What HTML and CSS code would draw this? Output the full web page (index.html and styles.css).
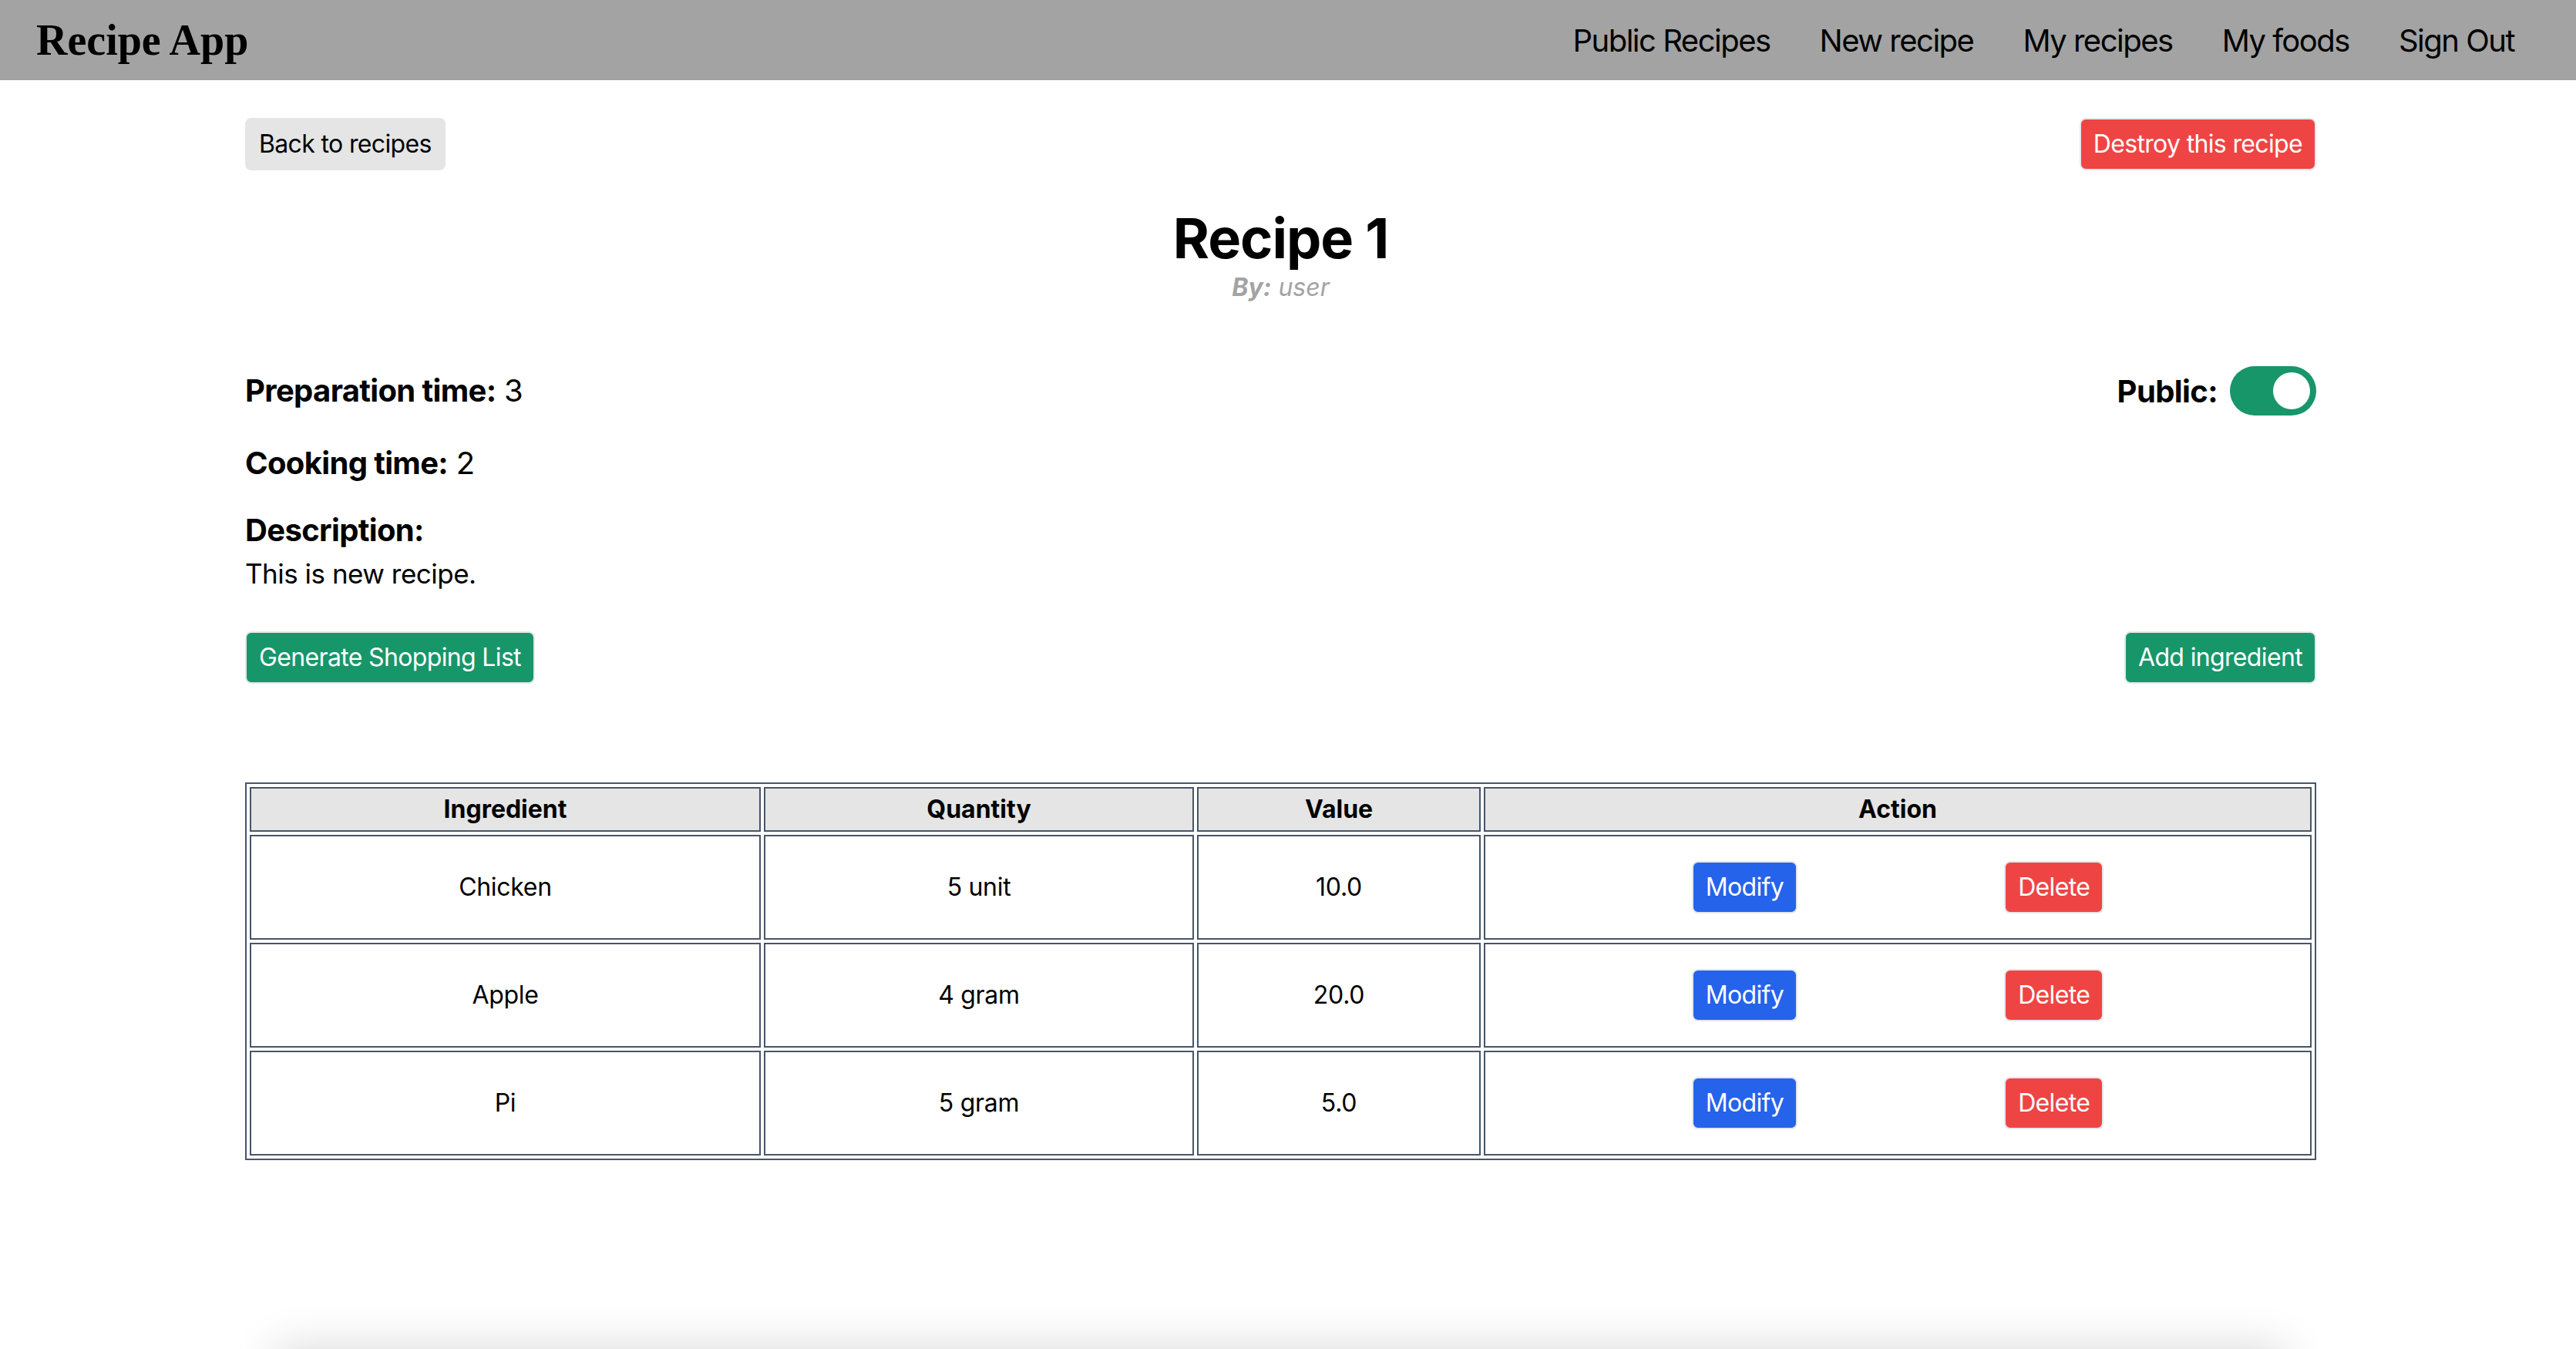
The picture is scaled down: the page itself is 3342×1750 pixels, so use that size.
FILE: index.html
```html
<!DOCTYPE html>
<html lang="en">
<head>
<meta charset="utf-8">
<title>Recipe App</title>
<link rel="stylesheet" href="styles.css">
</head>
<body>
<nav class="navbar">
  <a class="brand" href="#">Recipe App</a>
  <div class="nav-links">
    <a href="#">Public Recipes</a>
    <a href="#">New recipe</a>
    <a href="#">My recipes</a>
    <a href="#">My foods</a>
    <a href="#">Sign Out</a>
  </div>
</nav>

<main class="page">
  <div class="top-row">
    <a class="btn btn-grey" href="#">Back to recipes</a>
    <button class="btn btn-red">Destroy this recipe</button>
  </div>

  <h1 class="title">Recipe 1</h1>
  <p class="author"><b>By:</b> user</p>

  <div class="info-row">
    <p class="info"><b>Preparation time:</b> 3</p>
    <div class="public">
      <b>Public:</b>
      <span class="toggle"><span class="knob"></span></span>
    </div>
  </div>
  <p class="info cooking"><b>Cooking time:</b> 2</p>
  <p class="info desc-label"><b>Description:</b></p>
  <p class="desc">This is new recipe.</p>

  <div class="action-row">
    <button class="btn btn-green">Generate Shopping List</button>
    <button class="btn btn-green">Add ingredient</button>
  </div>

  <table class="ingredients">
    <thead>
      <tr>
        <th class="c-ing">Ingredient</th>
        <th class="c-qty">Quantity</th>
        <th class="c-val">Value</th>
        <th class="c-act">Action</th>
      </tr>
    </thead>
    <tbody>
      <tr>
        <td>Chicken</td>
        <td>5 unit</td>
        <td>10.0</td>
        <td><div class="actions"><button class="btn btn-blue">Modify</button><button class="btn btn-red">Delete</button></div></td>
      </tr>
      <tr>
        <td>Apple</td>
        <td>4 gram</td>
        <td>20.0</td>
        <td><div class="actions"><button class="btn btn-blue">Modify</button><button class="btn btn-red">Delete</button></div></td>
      </tr>
      <tr>
        <td>Pi</td>
        <td>5 gram</td>
        <td>5.0</td>
        <td><div class="actions"><button class="btn btn-blue">Modify</button><button class="btn btn-red">Delete</button></div></td>
      </tr>
    </tbody>
  </table>

  <div class="shadow-wrap"><div class="shadow-box"></div></div>
</main>
</body>
</html>
```

FILE: styles.css
```css
* { box-sizing: border-box; }

html, body {
  margin: 0;
  padding: 0;
  background: #ffffff;
}

body {
  display: flex;
  flex-direction: column;
  height: 100vh;
  font-family: Inter, "Noto Sans", sans-serif;
  color: #000000;
  overflow: hidden;
}

.navbar {
  flex-shrink: 0;
  display: flex;
  justify-content: space-between;
  align-items: center;
  height: 104px;
  padding: 0 48px 0 47px;
  background: #a3a3a3;
}

.brand {
  font-family: "Liberation Serif", "Times New Roman", serif;
  font-weight: bold;
  font-size: 56px;
  color: #000000;
  text-decoration: none;
}

.nav-links {
  display: flex;
  align-items: center;
}

.nav-links a {
  padding: 0 32px;
  font-size: 40px;
  color: #000000;
  text-decoration: none;
  letter-spacing: -1.5px;
}

.page {
  flex: 1;
  display: flex;
  flex-direction: column;
  width: 2687px;
  margin-left: 318px;
  padding-top: 49px;
}

.top-row,
.action-row,
.info-row {
  display: flex;
  justify-content: space-between;
  align-items: center;
}

.btn {
  display: inline-block;
  font-family: Inter, "Noto Sans", sans-serif;
  font-size: 32px;
  line-height: 48px;
  letter-spacing: -0.65px;
  padding: 8px 16px;
  border: 2px solid #e5e7eb;
  border-radius: 8px;
  color: #ffffff;
  text-decoration: none;
  cursor: pointer;
}

.btn-grey {
  background: #e5e5e5;
  border-color: #e5e5e5;
  color: #000000;
}

.btn-red { background: #ef4444; }
.btn-green { background: #17966a; }
.btn-blue { background: #2563eb; }

.title {
  margin: 48px 0 0;
  text-align: center;
  font-size: 72px;
  line-height: 80px;
  font-weight: 700;
  letter-spacing: -1px;
}

.author {
  margin: 0;
  text-align: center;
  font-size: 32px;
  line-height: 48px;
  font-style: italic;
  color: #a3a3a3;
}

.info {
  margin: 0;
  font-size: 40px;
  line-height: 56px;
  letter-spacing: -0.65px;
}

.info-row {
  margin-top: 78px;
  height: 64px;
}

.public {
  display: flex;
  align-items: center;
  gap: 16px;
  font-size: 40px;
  letter-spacing: -0.6px;
}

.toggle {
  display: flex;
  justify-content: flex-end;
  align-items: center;
  width: 112px;
  height: 64px;
  padding: 8px;
  border-radius: 32px;
  background: #17966a;
}

.knob {
  width: 48px;
  height: 48px;
  border-radius: 50%;
  background: #ffffff;
}

.cooking { margin-top: 34px; }
.desc-label { margin-top: 31px; }

.desc {
  margin: 0;
  font-size: 35px;
  line-height: 56px;
  letter-spacing: -0.5px;
}

.action-row {
  margin-top: 47px;
}

.ingredients {
  width: 100%;
  margin-top: 128px;
  table-layout: fixed;
  border-collapse: separate;
  border-spacing: 4px;
  border: 2px solid #475569;
  font-size: 32px;
}

.ingredients th,
.ingredients td {
  border: 2px solid #475569;
  text-align: center;
  vertical-align: middle;
}

.ingredients th {
  background: #e5e5e5;
  font-weight: 700;
  line-height: 54px;
  padding: 0;
}

.ingredients td {
  padding: 32px 16px;
  line-height: 48px;
  letter-spacing: -0.3px;
}

.c-ing { width: 663px; }
.c-qty { width: 558px; }
.c-val { width: 368px; }

.actions {
  display: flex;
  justify-content: center;
  gap: 268px;
}

.shadow-wrap {
  margin-top: auto;
  height: 60px;
  overflow: hidden;
  flex-shrink: 0;
}

.shadow-box {
  margin: 60px 40px 0;
  height: 100px;
  background: #ffffff;
  box-shadow: 0 0 60px rgba(0, 0, 0, 0.16);
}
```
